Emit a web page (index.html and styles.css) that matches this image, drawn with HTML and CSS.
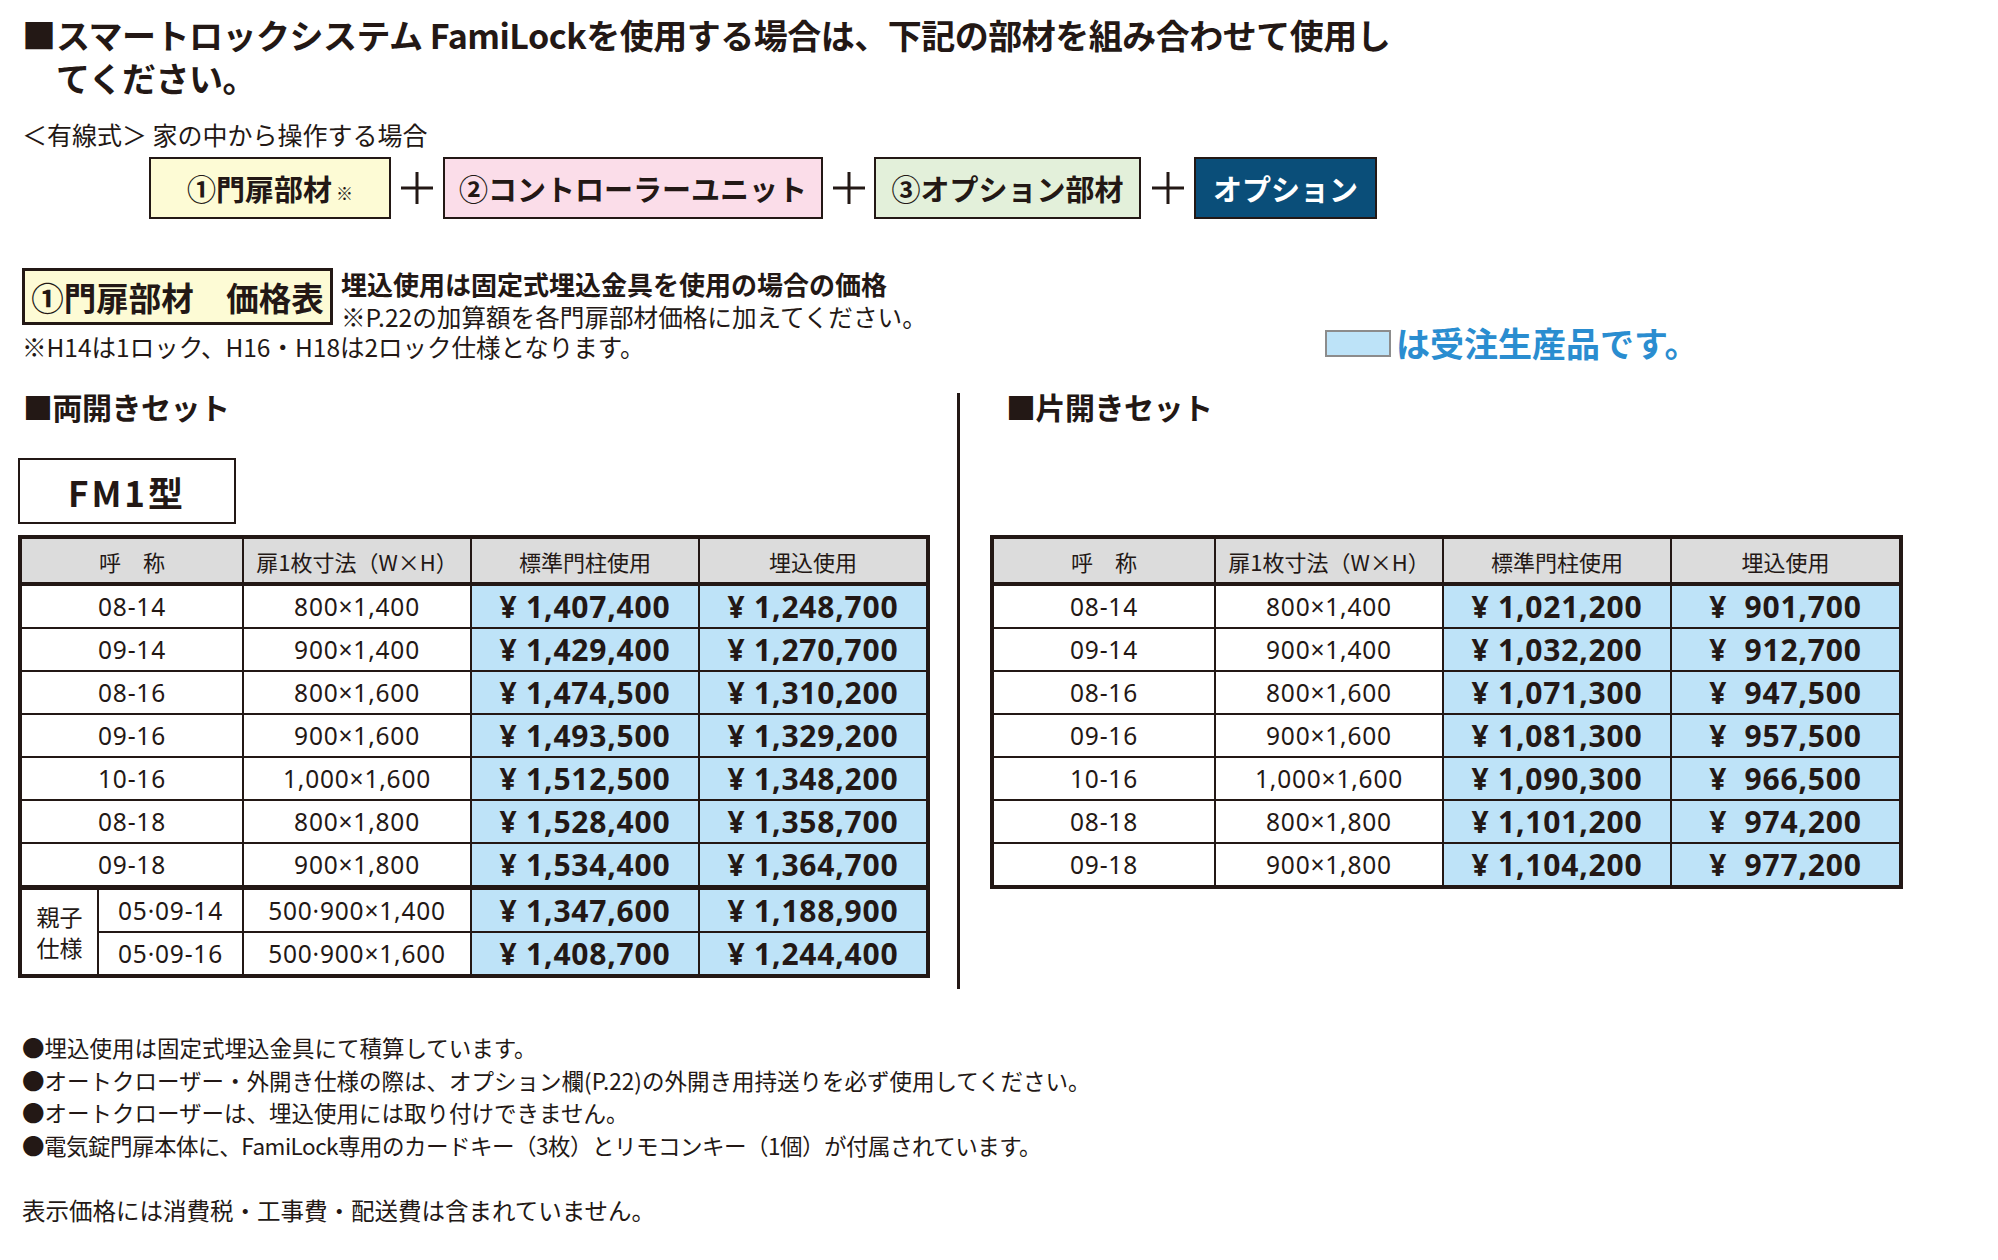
FILE: index.html
```html
<!DOCTYPE html>
<html lang="ja">
<head>
<meta charset="utf-8">
<title>FamiLock 価格表</title>
<link rel="stylesheet" href="styles.css">
</head>
<body>
<div class="page">
  <h1 class="title"><span class="sq">■</span><span>スマートロックシステム FamiLockを使用する場合は、下記の部材を組み合わせて使用し<br>てください。</span></h1>

  <p class="wired">＜有線式＞ 家の中から操作する場合</p>

  <div class="combo">
    <div class="part part-yellow w1">①門扉部材<span class="kome">※</span></div>
    <div class="plus p1"><svg width="36" height="36" viewBox="0 0 36 36"><path d="M18 2V34M2 18H34" stroke="#231815" stroke-width="3" fill="none"/></svg></div>
    <div class="part part-pink w2">②コントローラーユニット</div>
    <div class="plus p2"><svg width="36" height="36" viewBox="0 0 36 36"><path d="M18 2V34M2 18H34" stroke="#231815" stroke-width="3" fill="none"/></svg></div>
    <div class="part part-green w3">③オプション部材</div>
    <div class="plus p3"><svg width="36" height="36" viewBox="0 0 36 36"><path d="M18 2V34M2 18H34" stroke="#231815" stroke-width="3" fill="none"/></svg></div>
    <div class="part part-navy w4">オプション</div>
  </div>

  <div class="price-head">
    <div class="price-label">①門扉部材　価格表</div>
    <div class="price-sub">
      <p class="sub1">埋込使用は固定式埋込金具を使用の場合の価格</p>
      <p class="sub2">※P.22の加算額を各門扉部材価格に加えてください。</p>
    </div>
  </div>

  <div class="note-row">
    <p class="lock-note">※H14は1ロック、H16・H18は2ロック仕様となります。</p>
    <div class="legend"><span class="swatch"></span><span class="legend-text">は受注生産品です。</span></div>
  </div>

  <div class="cols">
    <section class="col col-left">
      <h2 class="set-title">■両開きセット</h2>
      <div class="model">FM1型</div>
      <table class="price-table">
        <colgroup><col class="c-a"><col class="c-b"><col class="c-c"><col class="c-d"><col class="c-e"></colgroup>
        <thead>
          <tr><th colspan="2">呼　称</th><th>扉1枚寸法（W×H）</th><th>標準門柱使用</th><th>埋込使用</th></tr>
        </thead>
        <tbody>
          <tr><td colspan="2" class="num">08-14</td><td class="num">800×1,400</td><td class="pr">¥ 1,407,400</td><td class="pr">¥ 1,248,700</td></tr>
          <tr><td colspan="2" class="num">09-14</td><td class="num">900×1,400</td><td class="pr">¥ 1,429,400</td><td class="pr">¥ 1,270,700</td></tr>
          <tr><td colspan="2" class="num">08-16</td><td class="num">800×1,600</td><td class="pr">¥ 1,474,500</td><td class="pr">¥ 1,310,200</td></tr>
          <tr><td colspan="2" class="num">09-16</td><td class="num">900×1,600</td><td class="pr">¥ 1,493,500</td><td class="pr">¥ 1,329,200</td></tr>
          <tr><td colspan="2" class="num">10-16</td><td class="num">1,000×1,600</td><td class="pr">¥ 1,512,500</td><td class="pr">¥ 1,348,200</td></tr>
          <tr><td colspan="2" class="num">08-18</td><td class="num">800×1,800</td><td class="pr">¥ 1,528,400</td><td class="pr">¥ 1,358,700</td></tr>
          <tr><td colspan="2" class="num">09-18</td><td class="num">900×1,800</td><td class="pr">¥ 1,534,400</td><td class="pr">¥ 1,364,700</td></tr>
          <tr class="grp"><td rowspan="2" class="oyako">親子<br>仕様</td><td class="num">05·09-14</td><td class="num">500·900×1,400</td><td class="pr">¥ 1,347,600</td><td class="pr">¥ 1,188,900</td></tr>
          <tr class="grp2"><td class="num">05·09-16</td><td class="num">500·900×1,600</td><td class="pr">¥ 1,408,700</td><td class="pr">¥ 1,244,400</td></tr>
        </tbody>
      </table>
    </section>

    <div class="divider"></div>

    <section class="col col-right">
      <h2 class="set-title set-title-r">■片開きセット</h2>
      <table class="price-table price-table-r">
        <colgroup><col class="r-a"><col class="r-b"><col class="r-c"><col class="r-d"></colgroup>
        <thead>
          <tr><th>呼　称</th><th>扉1枚寸法（W×H）</th><th>標準門柱使用</th><th>埋込使用</th></tr>
        </thead>
        <tbody>
          <tr><td class="num">08-14</td><td class="num">800×1,400</td><td class="pr">¥ 1,021,200</td><td class="pr">¥  901,700</td></tr>
          <tr><td class="num">09-14</td><td class="num">900×1,400</td><td class="pr">¥ 1,032,200</td><td class="pr">¥  912,700</td></tr>
          <tr><td class="num">08-16</td><td class="num">800×1,600</td><td class="pr">¥ 1,071,300</td><td class="pr">¥  947,500</td></tr>
          <tr><td class="num">09-16</td><td class="num">900×1,600</td><td class="pr">¥ 1,081,300</td><td class="pr">¥  957,500</td></tr>
          <tr><td class="num">10-16</td><td class="num">1,000×1,600</td><td class="pr">¥ 1,090,300</td><td class="pr">¥  966,500</td></tr>
          <tr><td class="num">08-18</td><td class="num">800×1,800</td><td class="pr">¥ 1,101,200</td><td class="pr">¥  974,200</td></tr>
          <tr><td class="num">09-18</td><td class="num">900×1,800</td><td class="pr">¥ 1,104,200</td><td class="pr">¥  977,200</td></tr>
        </tbody>
      </table>
    </section>
  </div>

  <ul class="notes">
    <li>●埋込使用は固定式埋込金具にて積算しています。</li>
    <li>●オートクローザー・外開き仕様の際は、オプション欄(P.22)の外開き用持送りを必ず使用してください。</li>
    <li>●オートクローザーは、埋込使用には取り付けできません。</li>
    <li class="tight">●電気錠門扉本体に、FamiLock専用のカードキー（3枚）とリモコンキー（1個）が付属されています。</li>
  </ul>

  <p class="footer">表示価格には消費税・工事費・配送費は含まれていません。</p>
</div>
</body>
</html>
```
FILE: styles.css
```css
* { box-sizing: border-box; }
html, body { margin: 0; padding: 0; background: #ffffff; }
body {
  font-family: "Noto Sans CJK JP", "Noto Sans", sans-serif;
  color: #231815;
  width: 1998px;
}
p, h1, h2, ul { margin: 0; padding: 0; }

.page { padding: 13px 0 0 22px; }

/* title */
.title {
  display: flex;
  font-size: 34px;
  line-height: 43px;
  font-weight: 700;
  letter-spacing: -0.5px;
}
.title .sq { flex: 0 0 34px; }

.wired {
  margin-top: 19px;
  font-size: 25px;
  line-height: 32px;
  font-weight: 400;
}

/* combination row */
.combo {
  display: flex;
  align-items: center;
  margin-top: 7px;
  margin-left: 127px;
}
.part {
  height: 62px;
  border: 2px solid #231815;
  display: flex;
  align-items: center;
  justify-content: center;
  font-size: 29px;
  font-weight: 700;
}
.part-yellow { background: #fdfbd5; }
.part-pink { background: #fbdde9; }
.part-green { background: #e3f0da; }
.part-navy { background: #0a4e79; color: #ffffff; }
.w1 { width: 242px; }
.w2 { width: 380px; }
.w3 { width: 267px; }
.w4 { width: 183px; }
.kome { font-size: 17px; font-weight: 400; margin-left: 4px; padding-top: 8px; }
.plus { display: flex; justify-content: center; align-items: center; height: 62px; }
.p1 { width: 52px; }
.p2 { width: 51px; }
.p3 { width: 53px; }

/* price header */
.price-head {
  display: flex;
  align-items: flex-start;
  margin-top: 49px;
}
.price-label {
  width: 311px;
  height: 57px;
  border: 3px solid #231815;
  background: #fdfbd5;
  font-size: 32.5px;
  font-weight: 700;
  display: flex;
  align-items: center;
  justify-content: center;
  white-space: nowrap;
}
.price-sub { margin-left: 8px; }
.sub1 { font-size: 26px; line-height: 32px; font-weight: 700; }
.sub2 { font-size: 24.6px; line-height: 32px; font-weight: 400; }

.note-row {
  display: grid;
  grid-template-columns: 1303px auto;
  align-items: start;
}
.lock-note { font-size: 24.5px; line-height: 30px; margin-top: 0; }
.legend { display: flex; align-items: center; margin-top: -8px; }
.swatch {
  width: 66px;
  height: 27px;
  background: #bde3f8;
  border: 2px solid #8c8c8c;
}
.legend-text {
  margin-left: 5px;
  font-size: 34px;
  line-height: 38px;
  font-weight: 700;
  color: #2a8dd0;
}

/* two column area */
.cols {
  display: flex;
  align-items: flex-start;
  margin-top: 29px;
  margin-left: -4px;
}
.col-left { width: 908px; }
.divider {
  width: 3px;
  height: 596px;
  margin: 2px 0 0 31px;
  background: #231815;
}
.col-right { width: 909px; margin-left: 30px; }

.set-title {
  font-size: 30px;
  line-height: 30px;
  font-weight: 700;
  padding-left: 5px;
  letter-spacing: -0.5px;
}
.set-title-r { padding-left: 16px; }

.model {
  margin-top: 37px;
  width: 218px;
  height: 66px;
  border: 2px solid #231815;
  display: flex;
  align-items: center;
  justify-content: center;
  font-size: 35px;
  font-weight: 700;
  letter-spacing: 3px;
}

/* tables */
.price-table {
  margin-top: 11px;
  width: 908px;
  table-layout: fixed;
  border-collapse: collapse;
  border: 4px solid #231815;
}
.price-table-r { margin-top: 114px; width: 909px; }
.c-a { width: 78px; }
.c-b { width: 145px; }
.c-c { width: 228px; }
.c-d { width: 228px; }
.c-e { width: 229px; }
.r-a { width: 223px; }
.r-b { width: 228px; }
.r-c { width: 228px; }
.r-d { width: 230px; }

.price-table th {
  height: 47px;
  background: #dcdcdc;
  font-size: 22px;
  font-weight: 400;
  border: 2px solid #231815;
  border-bottom: 4px solid #231815;
  padding: 0;
  text-align: center;
  vertical-align: middle;
}
.price-table td {
  height: 43px;
  border: 2px solid #231815;
  padding: 0;
  text-align: center;
  vertical-align: middle;
  white-space: pre;
}
.price-table td.num {
  font-family: "Noto Sans", "Noto Sans CJK JP", sans-serif;
  font-size: 24.5px;
  letter-spacing: 0.8px;
  font-weight: 400;
}
.price-table td.pr {
  background: #bee3f8;
  font-family: "Noto Sans", "Noto Sans CJK JP", sans-serif;
  font-size: 30px;
  font-weight: 700;
  letter-spacing: 0.8px;
}
.price-table tr.grp td { border-top: 5px solid #231815; height: 42px; }
.price-table tr.grp2 td { height: 41px; }
.price-table td.oyako {
  font-size: 23px;
  line-height: 31px;
  white-space: normal;
  background: #ffffff;
}

/* notes */
.notes {
  list-style: none;
  margin-top: 42px;
}
.notes li {
  font-size: 22.5px;
  line-height: 32.5px;
}
.notes li.tight { letter-spacing: -0.5px; }
.footer {
  margin-top: 33px;
  font-size: 23.5px;
  line-height: 32px;
}
```
